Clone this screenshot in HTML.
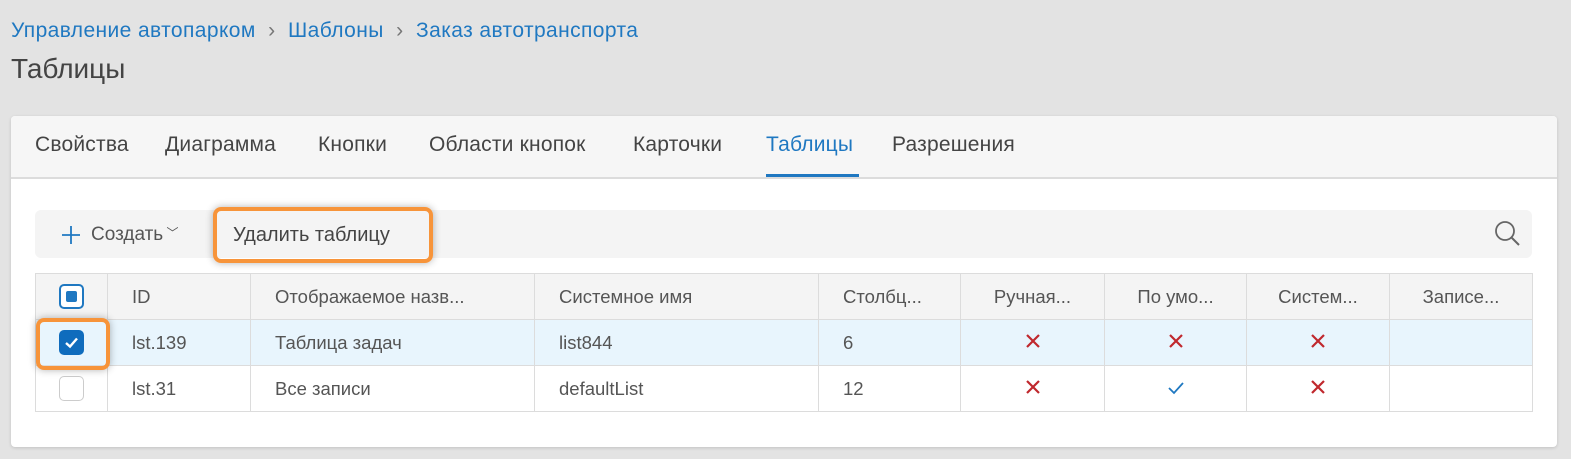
<!DOCTYPE html>
<html><head><meta charset="utf-8"><style>
*{box-sizing:border-box;margin:0;padding:0}
body{width:1571px;height:459px;background:#e3e3e3;font-family:"Liberation Sans","DejaVu Sans",sans-serif;position:relative;overflow:hidden;color:#444}
.a{position:absolute;white-space:nowrap}
.bc{top:19px;font-size:21px;color:#1f78c1;letter-spacing:0.4px}
.sep{color:#777}
.card{left:11px;top:116px;width:1546px;height:331px;background:#fff;border-radius:4px;box-shadow:0 1px 3px rgba(0,0,0,.15)}
.tabs{left:11px;top:116px;width:1546px;height:63px;background:#f6f6f6;border-bottom:2px solid #dcdcdc;border-radius:4px 4px 0 0}
.tab{top:133px;font-size:21px;color:#444;letter-spacing:0.2px}
.tb{left:35px;top:210px;width:1497px;height:48px;background:#f4f4f4;border-radius:6px}
table{position:absolute;left:35px;top:273px;border-collapse:collapse;font-size:18.5px;color:#555;table-layout:fixed}
td{border:1px solid #dcdcdc;height:46px;padding-left:24px;white-space:nowrap;overflow:hidden}
tr.h td{background:#f4f4f4}
tr.s td{background:#e8f5fd}
.c{text-align:center;padding:0}
.cb{display:inline-block;width:25px;height:25px;border-radius:5px;vertical-align:middle}
.hl{position:absolute;border:4px solid #f7943a;border-radius:8px;box-shadow:0 0 8px rgba(0,0,0,.3)}
</style></head><body>
<div class="a bc" style="left:11px">Управление автопарком <span class="sep">&nbsp;›&nbsp;</span> Шаблоны <span class="sep">&nbsp;›&nbsp;</span> Заказ автотранспорта</div>
<div class="a" style="left:11px;top:53px;font-size:28px;color:#444">Таблицы</div>
<div class="a card"></div>
<div class="a tabs"></div>
<div class="a tab" style="left:35px">Свойства</div>
<div class="a tab" style="left:165px">Диаграмма</div>
<div class="a tab" style="left:318px">Кнопки</div>
<div class="a tab" style="left:429px">Области кнопок</div>
<div class="a tab" style="left:633px">Карточки</div>
<div class="a tab" style="left:766px;color:#1f78c1">Таблицы</div>
<div class="a" style="left:766px;top:174px;width:93px;height:3px;background:#1f78c1"></div>
<div class="a tab" style="left:892px">Разрешения</div>
<div class="a tb"></div>
<svg class="a" style="left:60px;top:224px" width="22" height="22" viewBox="0 0 22 22"><path d="M11 2V20M2 11H20" stroke="#1f78c1" stroke-width="1.8"/></svg>
<div class="a" style="left:91px;top:224px;font-size:19px;color:#555">Создать<span style="font-size:12px;vertical-align:3px"> ﹀</span></div>
<div class="a" style="left:233px;top:224px;font-size:20px;color:#444">Удалить таблицу</div>
<div class="hl" style="left:213px;top:207px;width:220px;height:56px"></div>
<svg class="a" style="left:1494px;top:220px" width="28" height="28" viewBox="0 0 28 28"><circle cx="11" cy="11" r="9" fill="none" stroke="#666" stroke-width="1.8"/><path d="M17.5 17.5L25 25" stroke="#666" stroke-width="2"/></svg>
<table>
<colgroup><col style="width:72px"><col style="width:143px"><col style="width:284px"><col style="width:284px"><col style="width:142px"><col style="width:144px"><col style="width:142px"><col style="width:143px"><col style="width:143px"></colgroup>
<tr class="h"><td class="c"><span class="cb" style="border:2px solid #1f78c1;background:#fff;position:relative"><span style="position:absolute;left:5px;top:5px;width:11px;height:11px;background:#1f78c1;border-radius:2px"></span></span></td><td>ID</td><td>Отображаемое назв...</td><td>Системное имя</td><td>Столбц...</td><td class="c">Ручная...</td><td class="c">По умо...</td><td class="c">Систем...</td><td class="c">Записе...</td></tr>
<tr class="s"><td class="c"><span class="cb" style="background:#0f6cbd;position:relative"><svg style="position:absolute;left:5px;top:6px" width="15" height="13" viewBox="0 0 15 13"><path d="M2 7L6 10.5L13 2.5" fill="none" stroke="#fff" stroke-width="2.4"/></svg></span></td><td>lst.139</td><td>Таблица задач</td><td>list844</td><td>6</td>
<td class="c"><svg width="16" height="16"><path d="M2 2L14 14M14 2L2 14" stroke="#c0282d" stroke-width="2.2"/></svg></td>
<td class="c"><svg width="16" height="16"><path d="M2 2L14 14M14 2L2 14" stroke="#c0282d" stroke-width="2.2"/></svg></td>
<td class="c"><svg width="16" height="16"><path d="M2 2L14 14M14 2L2 14" stroke="#c0282d" stroke-width="2.2"/></svg></td><td></td></tr>
<tr><td class="c"><span class="cb" style="border:1px solid #ccc;background:#fff"></span></td><td>lst.31</td><td>Все записи</td><td>defaultList</td><td>12</td>
<td class="c"><svg width="16" height="16"><path d="M2 2L14 14M14 2L2 14" stroke="#c0282d" stroke-width="2.2"/></svg></td>
<td class="c"><svg width="16" height="14"><path d="M1 7L6 12L15 2" fill="none" stroke="#1f78c1" stroke-width="1.8"/></svg></td>
<td class="c"><svg width="16" height="16"><path d="M2 2L14 14M14 2L2 14" stroke="#c0282d" stroke-width="2.2"/></svg></td><td></td></tr>
</table>
<div class="hl" style="left:36px;top:318px;width:74px;height:52px"></div>
</body></html>
